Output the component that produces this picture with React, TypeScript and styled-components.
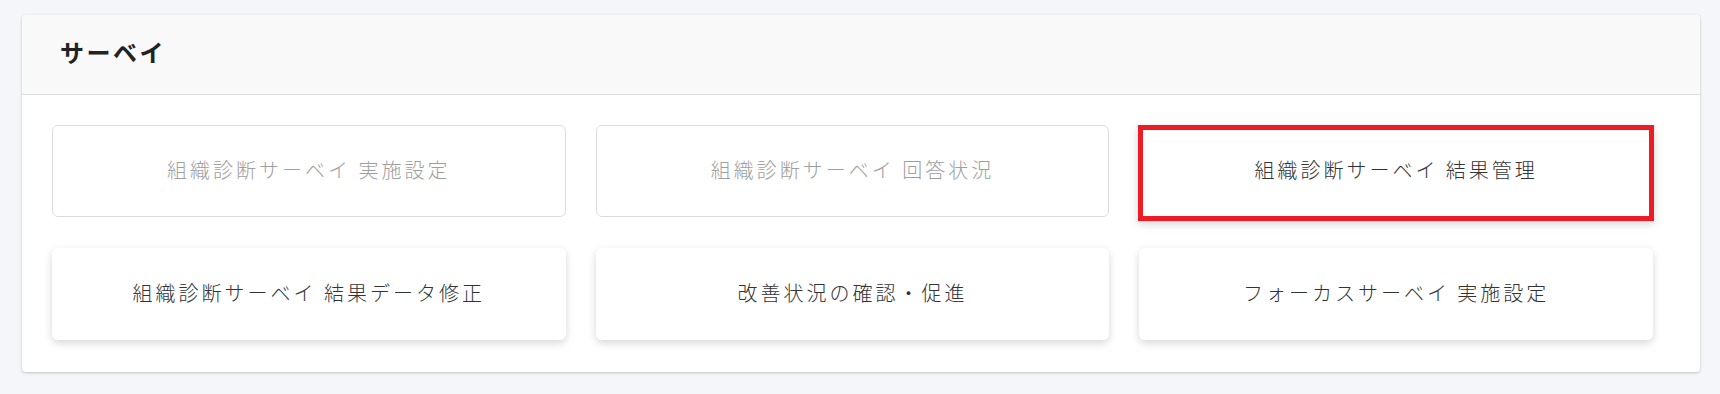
import styled, { createGlobalStyle } from 'styled-components';

const GlobalStyle = createGlobalStyle`
  html, body {
    margin: 0;
    padding: 0;
    background: #f5f6f9;
    font-family: 'Noto Sans CJK JP', 'Noto Sans', sans-serif;
  }
`;

type Item = {
  label: string;
  state: 'disabled' | 'normal' | 'selected';
};

const items: Item[] = [
  { label: '組織診断サーベイ 実施設定', state: 'disabled' },
  { label: '組織診断サーベイ 回答状況', state: 'disabled' },
  { label: '組織診断サーベイ 結果管理', state: 'selected' },
  { label: '組織診断サーベイ 結果データ修正', state: 'normal' },
  { label: '改善状況の確認・促進', state: 'normal' },
  { label: 'フォーカスサーベイ 実施設定', state: 'normal' },
];

export default function App() {
  return (
    <>
      <GlobalStyle />
      <Page>
        <Panel>
          <PanelHeader>
            <PanelTitle>サーベイ</PanelTitle>
          </PanelHeader>
          <MenuGrid>
            {items.map((item) => (
              <MenuButton key={item.label} $state={item.state} type="button">
                {item.label}
              </MenuButton>
            ))}
          </MenuGrid>
        </Panel>
      </Page>
    </>
  );
}

const Page = styled.div`
  width: 1720px;
  height: 394px;
  padding: 15px 20px 0 22px;
  box-sizing: border-box;
`;

const Panel = styled.section`
  background: #fff;
  border-radius: 4px;
  box-shadow: 0 1px 3px rgba(0, 0, 0, 0.22);
  overflow: hidden;
`;

const PanelHeader = styled.header`
  height: 79px;
  display: flex;
  align-items: center;
  padding: 0 38px;
  background: #f9f9f9;
  border-bottom: 1px solid #dedede;
`;

const PanelTitle = styled.h2`
  margin: 0;
  font-size: 24px;
  font-weight: 700;
  letter-spacing: 2.5px;
  color: #222;
  padding-bottom: 7px;
`;

const MenuGrid = styled.div`
  display: grid;
  grid-template-columns: repeat(3, 1fr);
  column-gap: 30px;
  row-gap: 31px;
  padding: 30px 47px 32px 30px;
`;

const MenuButton = styled.button<{ $state: Item['state'] }>`
  height: 92px;
  display: flex;
  align-items: center;
  justify-content: center;
  box-sizing: border-box;
  padding: 0 0 4px;
  background: #fff;
  font-family: inherit;
  font-size: 20px;
  font-weight: 300;
  letter-spacing: 3px;
  cursor: pointer;
  border-radius: 6px;
  color: ${({ $state }) => ($state === 'disabled' ? '#9e9e9e' : '#333')};
  border: ${({ $state }) =>
    $state === 'disabled' ? '1px solid #dcdcdc' : '1px solid transparent'};
  box-shadow: ${({ $state }) =>
    $state === 'disabled' ? 'none' : '0 3px 9px rgba(0, 0, 0, 0.16)'};

  ${({ $state }) =>
    $state === 'selected' &&
    `
    height: 96px;
    margin: 0 -1px -4px -1px;
    padding-bottom: 8px;
    border: 5px solid #ed1c24;
    border-radius: 0;
  `}
`;
